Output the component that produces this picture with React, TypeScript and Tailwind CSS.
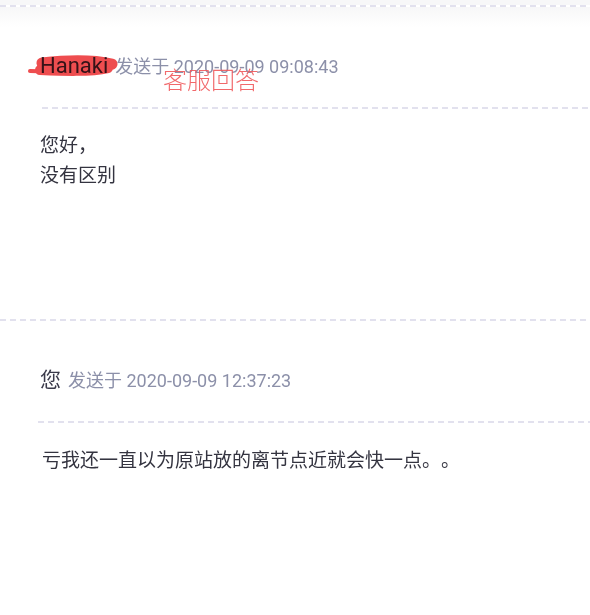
const Dash = ({ className = "" }: { className?: string }) => (
  <div
    className={`h-[2px] bg-[repeating-linear-gradient(to_right,#e2e1ee_0_6px,transparent_6px_10px)] ${className}`}
  />
);

const Meta = ({ time }: { time: string }) => (
  <span className="text-[18px] text-[#8c90a9] whitespace-nowrap">发送于 {time}</span>
);

// red marker scribble over the user name
const Scribble = () => (
  <svg
    className="absolute left-[-12px] top-[1px] mix-blend-multiply"
    width="96"
    height="26"
    viewBox="0 0 96 26"
    fill="none"
  >
    <path d="M14 8 C40 5 66 5 84 9" stroke="#ee4d4f" strokeWidth="11" strokeLinecap="round" />
    <path d="M12 15 C36 16 62 17 80 13" stroke="#ee4d4f" strokeWidth="10" strokeLinecap="round" />
    <path d="M2 16 L34 17" stroke="#ee4d4f" strokeWidth="4" strokeLinecap="round" />
  </svg>
);

export default function App() {
  return (
    <div className="w-[590px] h-[615px] overflow-hidden bg-white font-['Roboto','Noto_Sans_CJK_SC',sans-serif] [text-spacing-trim:space-all]">
      <div className="h-[5px] bg-[#f7f7f8]" />
      <Dash />
      <div className="h-[20px] bg-gradient-to-b from-[#f7f7f8] to-white" />

      <section className="pl-[40px] pt-[27px] h-[292px]">
        <div className="relative flex items-center h-[24px] gap-[7px]">
          <span className="text-[22px] leading-none text-[#3a3a4a]">Hanaki</span>
          <Meta time="2020-09-09 09:08:43" />
          <Scribble />
          <span className="absolute left-[123px] top-[13px] text-[24px] leading-none font-light text-[#f0595c] opacity-90 font-['Noto_Sans_CJK_SC',sans-serif]">
            客服回答
          </span>
        </div>
        <Dash className="mt-[29px] ml-[2px]" />
        <div className="mt-[22px] text-[19px] leading-[30px] text-[#343440]">
          <p>您好，</p>
          <p>没有区别</p>
        </div>
      </section>

      <Dash />

      <section className="pl-[40px] pt-[47px]">
        <div className="flex items-center h-[24px] gap-[7px]">
          <span className="text-[21px] leading-none text-[#3a3a4a]">您</span>
          <Meta time="2020-09-09 12:37:23" />
        </div>
        <Dash className="mt-[29px] -ml-[2px]" />
        <div className="mt-[23px] pl-[2px] text-[19px] leading-[30px] text-[#343440]">
          <p>亏我还一直以为原站放的离节点近就会快一点。。</p>
        </div>
      </section>
    </div>
  );
}
